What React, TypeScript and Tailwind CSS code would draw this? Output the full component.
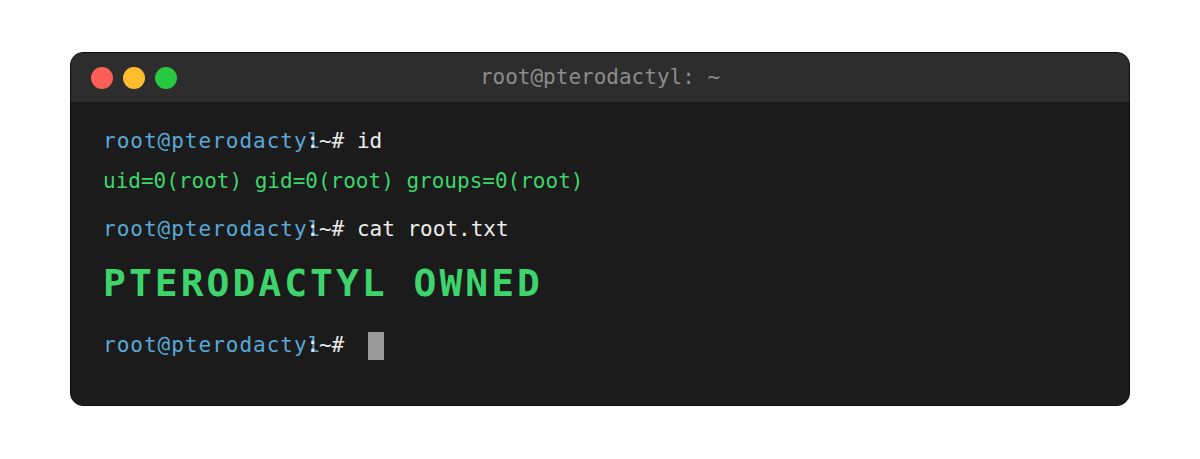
import React from "react";

const mono = { fontFamily: '"DejaVu Sans Mono", monospace' };

function Prompt() {
  return (
    <>
      <span className="text-[#5aa8d8] tracking-[1px]">root@pterodactyl</span>
      <span className="text-[#ececec] -ml-[15px]">:~#</span>
    </>
  );
}

export default function App() {
  return (
    <div className="w-[1200px] h-[459px] bg-white flex pt-[52px] pl-[70px]" style={mono}>
      <div className="w-[1060px] h-[354px] rounded-[13px] overflow-hidden border border-[#0e0e0e] bg-[#1b1b1b] flex flex-col">
        <div className="h-[49px] bg-[#2d2d2d] flex items-center relative shrink-0">
          <div className="flex gap-[10px] pl-[20px]">
            <div className="w-[22px] h-[22px] rounded-full bg-[#ff5f57]" />
            <div className="w-[22px] h-[22px] rounded-full bg-[#febc2e]" />
            <div className="w-[22px] h-[22px] rounded-full bg-[#28c840]" />
          </div>
          <div className="absolute inset-0 flex items-center justify-center text-[21px] text-[#8c8c8c]">
            root@pterodactyl: ~
          </div>
        </div>
        <div className="flex flex-col pl-[32px] pt-[24px] text-[21px]">
          <div className="h-[32px] flex items-center whitespace-pre">
            <Prompt />
            <span className="text-[#ececec]"> id</span>
          </div>
          <div className="h-[32px] mt-[8px] flex items-center whitespace-pre text-[#3ed46c]">
            uid=0(root) gid=0(root) groups=0(root)
          </div>
          <div className="h-[32px] mt-[16px] flex items-center whitespace-pre">
            <Prompt />
            <span className="text-[#ececec]"> cat root.txt</span>
          </div>
          <div className="h-[50px] mt-[12px] flex items-center whitespace-pre text-[#3ed46c] text-[38px] font-bold tracking-[3px]">
            PTERODACTYL OWNED
          </div>
          <div className="h-[32px] mt-[22px] flex items-center whitespace-pre">
            <Prompt />
            <span className="w-[16px] h-[28px] bg-[#9a9a9a] ml-[24px]" />
          </div>
        </div>
      </div>
    </div>
  );
}
